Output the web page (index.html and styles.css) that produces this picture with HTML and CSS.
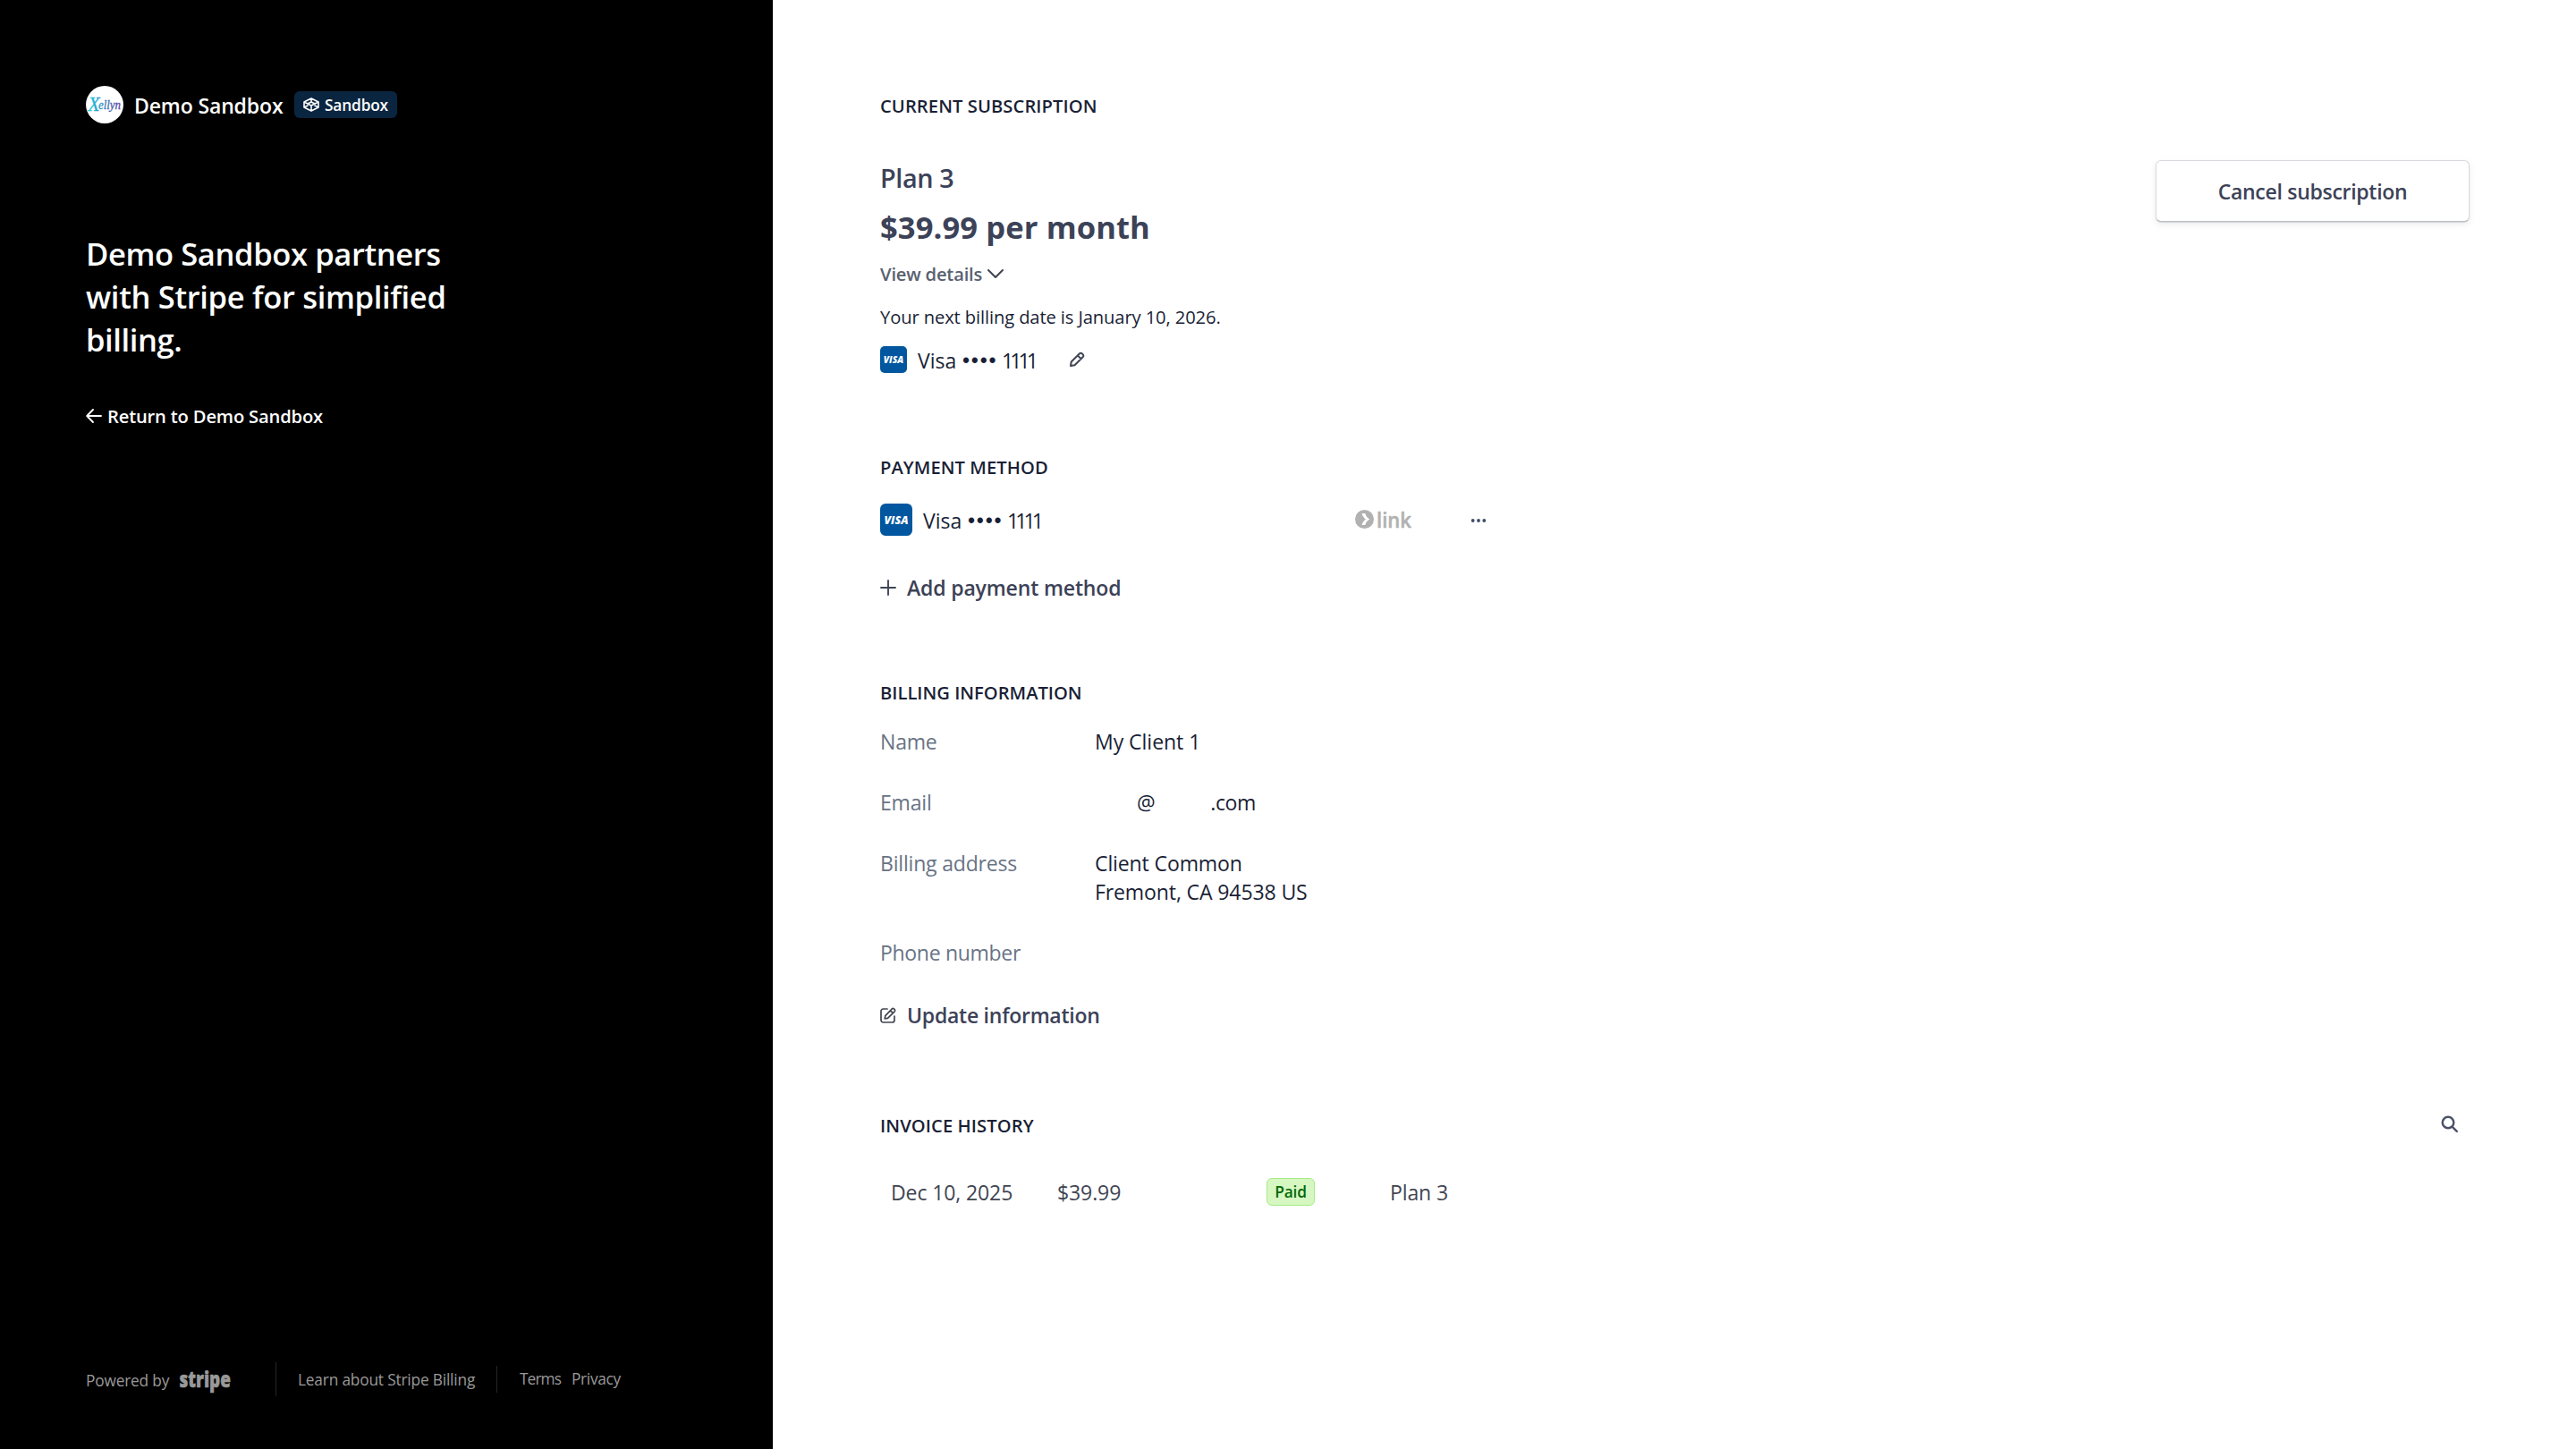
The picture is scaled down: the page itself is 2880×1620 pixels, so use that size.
FILE: index.html
```html
<!DOCTYPE html>
<html lang="en">
<head>
<meta charset="utf-8">
<title>Demo Sandbox billing</title>
<link rel="stylesheet" href="styles.css">
</head>
<body>
<div class="portal">
  <aside class="sidebar">
    <header class="brand">
      <svg class="brand-logo" width="42" height="42" viewBox="0 0 42 42">
        <defs>
          <linearGradient id="ink" gradientUnits="userSpaceOnUse" x1="2" y1="0" x2="40" y2="0">
            <stop offset="0" stop-color="#1fd3e6"/>
            <stop offset=".45" stop-color="#2f86bd"/>
            <stop offset="1" stop-color="#5a3c9c"/>
          </linearGradient>
        </defs>
        <circle cx="21" cy="21" r="21" fill="#fff"/>
        <text class="logo-text" fill="url(#ink)"><tspan class="logo-x" x="2.500" y="27.500" textLength="13" lengthAdjust="spacingAndGlyphs">X</tspan><tspan x="14" y="26" textLength="25" lengthAdjust="spacingAndGlyphs">ellyn</tspan></text>
      </svg>
      <span class="brand-name">Demo Sandbox</span>
      <span class="mode-badge">
        <svg width="18" height="16" viewBox="0 0 18 16" fill="none" stroke="#fff" stroke-width="1.6" stroke-linejoin="round">
          <path d="M9 1 17 5v6l-8 4-8-4V5zM1 5l8 4 8-4M9 1v4M9 9v6M1 11l4.500-2.300M17 11l-4.500-2.300M5 7l4-2 4 2"/>
        </svg>
        <span>Sandbox</span>
      </span>
    </header>
    <h1 class="headline">Demo Sandbox partners<br><span class="headline-mid">with Stripe for simplified</span><br>billing.</h1>
    <a class="return">
      <svg width="18" height="18" viewBox="0 0 18 18" fill="none" stroke="#fff" stroke-width="1.9" stroke-linecap="round" stroke-linejoin="round"><path d="M17 9H1.500M8 2 1.200 9 8 16"/></svg>
      <span>Return to Demo Sandbox</span>
    </a>
    <footer class="legal">
      <span class="powered">Powered by</span>
      <svg class="stripe" width="60" height="40" viewBox="0 -5 60 40"><text class="stripe-text" x="0.500" y="22.500" textLength="57.500" lengthAdjust="spacingAndGlyphs">stripe</text></svg>
      <span class="rule rule-tall"></span>
      <span class="learn">Learn about Stripe Billing</span>
      <span class="rule rule-short"></span>
      <span class="terms">Terms</span>
      <span class="privacy">Privacy</span>
    </footer>
  </aside>

  <main class="content">
    <section>
      <h2 class="title t-current">Current subscription</h2>
      <div class="plan-row">
        <div class="plan">
          <div class="plan-name">Plan 3</div>
          <div class="plan-price">$39.99 per month</div>
          <div class="details">View details
            <svg width="20" height="12" viewBox="0 0 20 12" fill="none" stroke="#414552" stroke-width="2.100" stroke-linecap="round" stroke-linejoin="round"><path d="M2 2l8 8 8-8"/></svg>
          </div>
          <div class="next">Your next billing date is January 10, 2026.</div>
          <div class="card card-small">
            <svg width="30" height="30" viewBox="0 0 36 36"><rect width="36" height="36" rx="6" fill="#00579f"/><text class="visa-text" x="4.500" y="22.500" textLength="27" lengthAdjust="spacingAndGlyphs">VISA</text></svg>
            <span class="card-label"><span class="network">Visa</span><span class="dots">••••</span><span class="last4">1111</span></span>
            <svg class="pencil" width="18" height="18" viewBox="0 0 18 18" fill="none" stroke="#414552" stroke-width="2" stroke-linejoin="round"><path d="M2 16l.7-4.500L12 2.200a1.800 1.800 0 0 1 2.600 0l1.200 1.200a1.800 1.800 0 0 1 0 2.600L6.500 15.300zM9.800 4.400l3.800 3.800"/></svg>
          </div>
        </div>
        <button class="cancel">Cancel subscription</button>
      </div>
    </section>

    <section>
      <h2 class="title t-payment">Payment method</h2>
      <div class="card card-large">
        <svg width="36" height="36" viewBox="0 0 36 36"><rect width="36" height="36" rx="6" fill="#00579f"/><text class="visa-text" x="4.500" y="22.500" textLength="27" lengthAdjust="spacingAndGlyphs">VISA</text></svg>
        <span class="card-label"><span class="network">Visa</span><span class="dots">••••</span><span class="last4">1111</span></span>
        <svg class="link" width="64" height="44" viewBox="0 -10 64 44"><circle cx="10.500" cy="11.500" r="10.500" fill="#b1b1b1"/><path d="M7.500 5h3.800c.6 2.800 2.500 5 5 6.500-2.500 1.500-4.400 3.700-5 6.500H7.500c.8-2.800 2.300-5 4.400-6.500-2.100-1.500-3.600-3.700-4.400-6.500z" fill="#fff"/><text class="link-text" x="24" y="20.500" textLength="39" lengthAdjust="spacingAndGlyphs">link</text></svg>
        <svg class="more" width="18" height="6" viewBox="0 0 18 6" fill="#414a66"><circle cx="2.700" cy="3" r="1.900"/><circle cx="9" cy="3" r="1.900"/><circle cx="15.300" cy="3" r="1.900"/></svg>
      </div>
      <div class="action add">
        <svg width="18" height="18" viewBox="0 0 18 18" fill="none" stroke="#414552" stroke-width="1.900" stroke-linecap="round"><path d="M9 1v16M1 9h16"/></svg>
        <span>Add payment method</span>
      </div>
    </section>

    <section>
      <h2 class="title t-billing">Billing information</h2>
      <dl class="info">
        <dt>Name</dt><dd class="client">My Client 1</dd>
        <dt>Email</dt><dd class="email"><span>@</span><span>.com</span></dd>
        <dt>Billing address</dt><dd>Client Common<br>Fremont, CA 94538 US</dd>
        <dt class="phone">Phone number</dt><dd></dd>
      </dl>
      <div class="action update">
        <svg width="18" height="18" viewBox="0 0 18 18" fill="none" stroke="#414552" stroke-width="1.700" stroke-linecap="round" stroke-linejoin="round"><path d="M8 2H3.500A2.500 2.500 0 0 0 1 4.500v10A2.500 2.500 0 0 0 3.500 17h10a2.500 2.500 0 0 0 2.500-2.500V10M5.200 12.800l.6-3.200 7.500-7.700a1.500 1.500 0 0 1 2.100 0l.8.8a1.500 1.500 0 0 1 0 2.100L8.500 12.300zM11.500 3.800l2.800 2.800"/></svg>
        <span>Update information</span>
      </div>
    </section>

    <section>
      <div class="history-head">
        <h2 class="title t-history">Invoice history</h2>
        <svg width="20" height="20" viewBox="0 0 20 20" fill="none" stroke="#4a5068" stroke-width="2.400" stroke-linecap="round"><circle cx="8" cy="8" r="6.300"/><path d="M12.800 12.800l5 5"/></svg>
      </div>
      <div class="invoice">
        <span>Dec 10, 2025</span>
        <span>$39.99</span>
        <span class="paid">Paid</span>
        <span>Plan 3</span>
      </div>
    </section>
  </main>
</div>
</body>
</html>
```
FILE: styles.css
```css
* { box-sizing: border-box; }
body { margin: 0; font-family: "Open Sans", "Noto Sans", sans-serif; font-size: 23.04px; color: #1a1f36; background: #fff; }
svg { display: block; flex: none; overflow: visible; }
h1, h2, dl, dd { margin: 0; }

.portal { display: grid; grid-template-columns: 864px 1fr; height: 1620px; white-space: nowrap; }

.sidebar { display: flex; flex-direction: column; padding: 96px 96px 56px; background: #000; color: #fff; }
.brand { display: flex; align-items: center; height: 42px; font-weight: 600; }
.brand-name { width: 167px; margin: 2px 12px 0; line-height: 30px; letter-spacing: -.15px; }
.mode-badge { display: flex; align-items: center; gap: 6px; width: 115px; height: 30px; padding-left: 10px; border-radius: 6px; background: #0a2540; font-size: 17.28px; line-height: 30px; letter-spacing: -.15px; }
.mode-badge span { margin-top: 1px; }
.logo-text { font: italic 400 15px "Liberation Serif", serif; stroke: url(#ink); stroke-width: .3px; }
.logo-x { font-size: 23px; }
.headline { margin: 122px 0 0; font-size: 34.56px; font-weight: 600; line-height: 48px; letter-spacing: -.4px; }
.headline-mid { letter-spacing: -.33px; }
.return { display: flex; align-items: center; gap: 6px; margin-top: 46px; font-size: 20.16px; font-weight: 600; line-height: 30px; letter-spacing: -.17px; }
.legal { display: flex; align-items: center; height: 42px; margin-top: auto; color: #999; font-size: 17.28px; line-height: 24px; }
.powered { width: 104px; margin-top: 2px; letter-spacing: -.17px; }
.stripe-text { font: 800 25px "Open Sans", sans-serif; fill: #999; stroke: #999; stroke-width: .6px; }
.rule { width: 1px; background: #262626; }
.rule-tall { height: 38px; margin: -2px 24px 0 48px; }
.rule-short { height: 30px; margin: -2px 25px 0 0; }
.learn { width: 222px; letter-spacing: -.17px; }
.terms { width: 58px; margin-top: -2px; letter-spacing: -.9px; }
.privacy { margin-top: -2px; letter-spacing: -.3px; }

.content { display: grid; grid-template-rows: 404px 252px 484px 1fr; padding: 103px 119px 0 120px; }
.title { font-size: 20.16px; font-weight: 600; line-height: 30px; text-transform: uppercase; }
.t-current { letter-spacing: .08px; }
.t-payment { letter-spacing: .06px; }
.t-history { letter-spacing: .1px; }

.plan-row { display: flex; justify-content: space-between; align-items: flex-start; margin-top: 46px; }
.plan-name { color: #3c4257; font-size: 28.8px; font-weight: 600; line-height: 40px; letter-spacing: -.38px; }
.plan-price { margin-top: 10px; color: #3c4257; font-size: 34.56px; font-weight: 700; line-height: 50px; letter-spacing: .1px; }
.details { display: flex; align-items: center; gap: 5px; margin-top: 12px; color: #596171; font-size: 20.16px; font-weight: 600; line-height: 30px; letter-spacing: -.18px; }
.next { margin-top: 18px; font-size: 20.16px; line-height: 30px; letter-spacing: -.11px; }
.card { display: flex; align-items: center; line-height: 30px; }
.card-small { height: 30px; margin-top: 18px; }
.card-large { height: 36px; margin-top: 26px; }
.card-label { display: flex; width: 132px; margin: 2px 0 0 12px; }
.network { width: 50px; }
.dots { width: 44px; font-family: "Liberation Sans", sans-serif; letter-spacing: 1.75px; }
.last4 { letter-spacing: -3.9px; }
.visa-text { font: italic 800 12.5px "Open Sans", sans-serif; fill: #fff; }
.pencil { margin-left: 37px; }
.cancel { width: 351px; height: 69px; padding: 0; border: 1px solid #d9dae0; border-bottom-color: #babcc6; border-radius: 6px; background: #fff; box-shadow: 0 1px 1px rgba(0,0,0,.12), 0 3px 7px rgba(60,66,87,.1); color: #3c4257; font: 600 23.04px "Open Sans", sans-serif; letter-spacing: -.3px; }

.link { margin: -1px 65px 0 351px; }
.link-text { font: 600 23px "Open Sans", sans-serif; fill: #b1b1b1; stroke: #b1b1b1; stroke-width: .5px; }
.more { margin-top: 2px; }
.action { display: flex; align-items: center; gap: 12px; color: #3c4257; font-weight: 600; line-height: 30px; }
.add { margin-top: 43px; letter-spacing: -.16px; }
.update { margin-top: 39px; letter-spacing: -.27px; }

.info { display: grid; grid-template-columns: 240px 1fr; row-gap: 36px; margin-top: 24px; line-height: 32px; letter-spacing: -.12px; }
.info dt { color: #687385; letter-spacing: -.2px; }
.info .phone { letter-spacing: -.32px; }
.client { letter-spacing: -.04px; }
.email { display: flex; gap: 62px; padding-left: 47px; letter-spacing: -.4px; }

.history-head { display: flex; justify-content: space-between; padding-right: 12px; }
.history-head svg { margin-top: 4px; }
.invoice { display: grid; grid-template-columns: 186px 234px 138px 1fr; align-items: center; height: 32px; margin: 44px 0 0 12px; line-height: 32px; letter-spacing: -.12px; color: #414552; }
.paid { width: 54px; height: 31px; margin-top: -1px; border: 1px solid #a6eb84; border-radius: 6px; background: #d7f7c2; color: #006908; font-size: 17.28px; font-weight: 600; line-height: 29px; text-align: center; letter-spacing: -.15px; }
```
